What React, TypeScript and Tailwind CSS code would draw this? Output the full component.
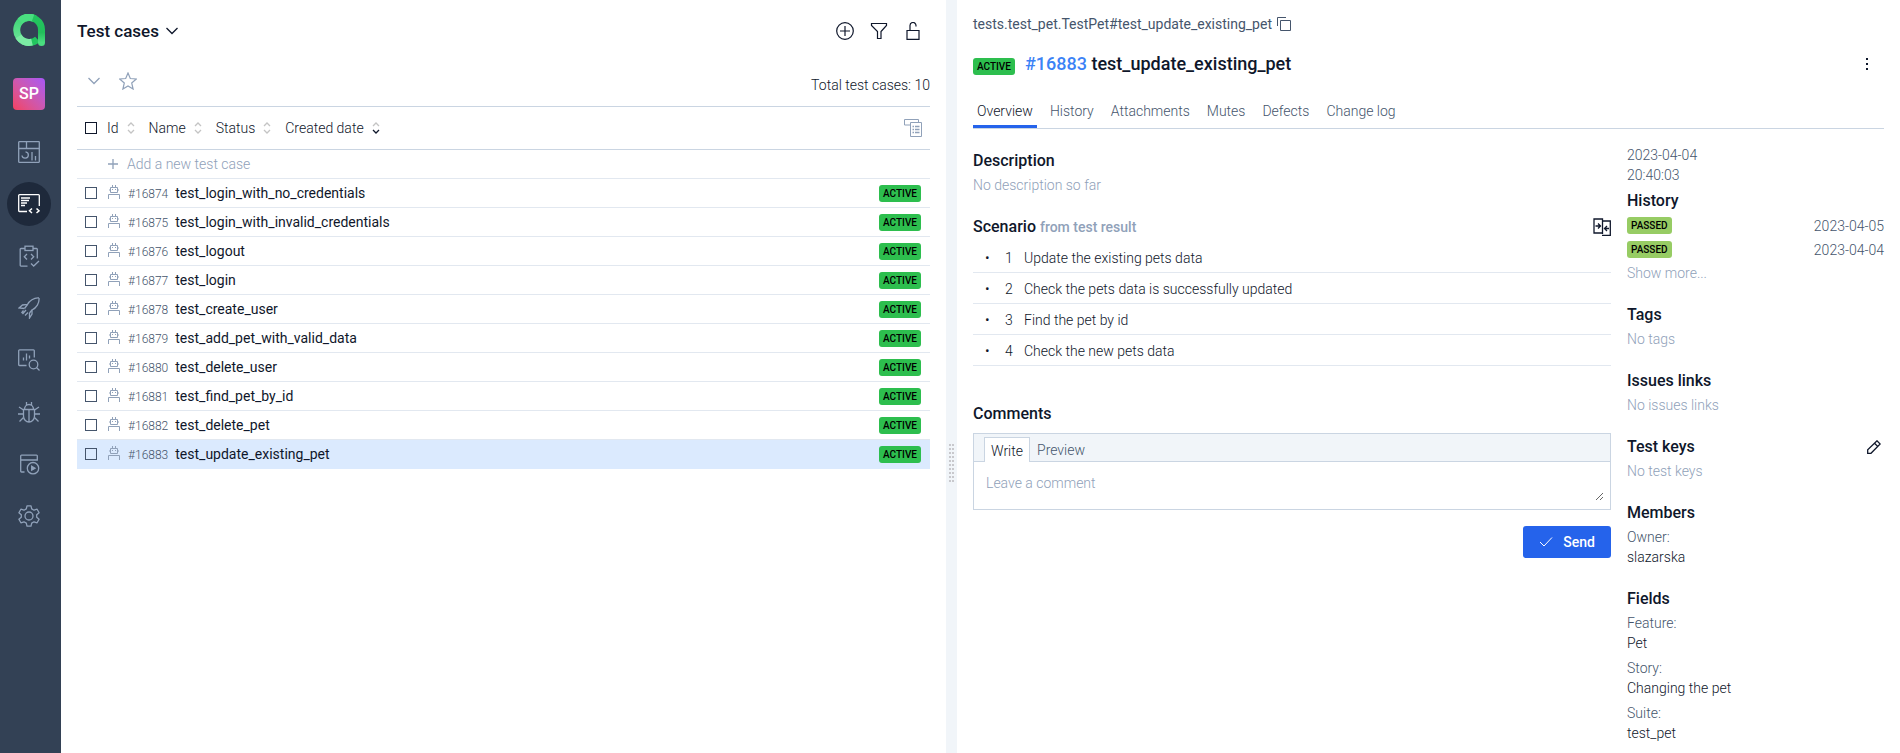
import React from "react";

type IconProps = { className?: string; children: React.ReactNode; box?: string; weight?: number };

function Icon({ className = "", children, box = "0 0 22 22", weight = 1 }: IconProps) {
  return (
    <svg viewBox={box} className={className} fill="none" stroke="currentColor" strokeWidth={weight} aria-hidden="true">
      {children}
    </svg>
  );
}

const navItems = [
  {
    label: "Dashboards",
    icon: (
      <>
        <rect x="0.7" y="0.7" width="20.600" height="20.600" rx="0.500" />
        <path d="M0.700 7.500h20.600M8.500 0.700v6.800M17.500 15v4.500M14 11v8.500" />
        <path d="M4 14.500a3.200 3.200 0 1 0 3.500-3.700" />
      </>
    ),
  },
  {
    label: "Test cases",
    active: true,
    icon: (
      <>
        <path d="M9 18.500H1.500a0.800 0.800 0 0 1-0.800-0.800V2.500a0.800 0.800 0 0 1 0.800-0.800h19a0.800 0.800 0 0 1 0.800 0.800V13" />
        <path d="M3 5h9M3 7.500h8M3 10h6M3 12.500h4" />
        <path d="M14 15.500l-2.500 2.300L14 20M18.500 15.500l2.500 2.300L18.500 20" strokeWidth="1.500" />
      </>
    ),
  },
  {
    label: "Test plans",
    icon: (
      <>
        <path d="M7 3.500H3a0.800 0.800 0 0 0-0.800 0.800v16a0.800 0.800 0 0 0 0.800 0.800h6.500" />
        <path d="M15 3.500h3.500a0.800 0.800 0 0 1 0.800 0.800V13.500" />
        <rect x="7" y="1.200" width="8" height="4.300" />
        <path d="M9 9l-2.700 2.700L9 14.500M13 9l2.700 2.700L13 14.500M13 18.500l2.700 2.500l5.300-5" />
      </>
    ),
  },
  {
    label: "Launches",
    icon: (
      <>
        <path d="M21 1c-5-0.500-10 3-11.500 6.500L4.500 8L1 11l5.500 0.500M21 1c0.500 5-2.500 10-7 12v4L11.500 21v-5" />
        <path d="M9.500 7.500L6.500 11.500M14 13l-2.500 3M8 13l-3.500 4M5.500 13.500l-2 2.500M10 15.500l-3 3" />
      </>
    ),
  },
  {
    label: "Analytics",
    icon: (
      <>
        <path d="M8.500 16.500H1.500a0.800 0.800 0 0 1-0.800-0.800V1.700a0.800 0.800 0 0 1 0.800-0.800h14a0.800 0.800 0 0 1 0.800 0.800V8.500" />
        <path d="M5.500 8.500V11.500M8.500 4.500v7M11.500 6.500v3" />
        <circle cx="15.500" cy="15.500" r="4.300" />
        <path d="M18.500 18.500l3 3" />
      </>
    ),
  },
  {
    label: "Defects",
    icon: (
      <>
        <path d="M5.500 8.500h11v6.500a5.500 6 0 0 1-11 0zM11 8.500v12.500M6.500 8.500a4.500 5 0 0 1 9 0M8.500 4V1M13.500 4V1" />
        <path d="M5.500 9L1 6M5.500 13H0M5.500 16.500L1.500 20.500M16.500 9l4.500-3M16.500 13H22M16.500 16.500l4 4" />
      </>
    ),
  },
  {
    label: "Jobs",
    icon: (
      <>
        <path d="M6.500 19H3.500a0.800 0.800 0 0 1-0.800-0.800V3a0.800 0.800 0 0 1 0.800-0.800h15a0.800 0.800 0 0 1 0.800 0.800V7H2.700" />
        <circle cx="15" cy="15.200" r="5.700" />
        <path d="M13.700 13.200l3.300 2l-3.300 2z" fill="currentColor" />
      </>
    ),
  },
  {
    label: "Settings",
    icon: (
      <>
        <circle cx="11" cy="11" r="4" />
        <path
          strokeLinejoin="round"
          d="M9 0.800h4l0.700 3.100 2.300 1.300 3.100-1 2 3.500-2.400 2.100v2.400l2.400 2.100-2 3.500-3.100-1-2.300 1.300-0.700 3.100H9l-0.700-3.100L6 16.800l-3.100 1-2-3.500 2.400-2.100V9.800L0.900 7.700l2-3.500 3.100 1 2.300-1.300z"
        />
      </>
    ),
  },
];

const cases = [
  { id: "#16874", name: "test_login_with_no_credentials" },
  { id: "#16875", name: "test_login_with_invalid_credentials" },
  { id: "#16876", name: "test_logout" },
  { id: "#16877", name: "test_login" },
  { id: "#16878", name: "test_create_user" },
  { id: "#16879", name: "test_add_pet_with_valid_data" },
  { id: "#16880", name: "test_delete_user" },
  { id: "#16881", name: "test_find_pet_by_id" },
  { id: "#16882", name: "test_delete_pet" },
  { id: "#16883", name: "test_update_existing_pet", selected: true },
];

const columns = [
  { label: "Id" },
  { label: "Name" },
  { label: "Status" },
  { label: "Created date", sorted: true },
];

const tabs = ["Overview", "History", "Attachments", "Mutes", "Defects", "Change log"];

const steps = [
  "Update the existing pets data",
  "Check the pets data is successfully updated",
  "Find the pet by id",
  "Check the new pets data",
];

const fields = [
  { label: "Feature:", value: "Pet" },
  { label: "Story:", value: "Changing the pet" },
  { label: "Suite:", value: "test_pet" },
];

function Logo() {
  return (
    <svg viewBox="0 0 32 32" className="size-8" aria-label="Allure TestOps" role="img" fill="none" strokeWidth="7">
      <defs>
        <linearGradient id="stem" x1="0" y1="0" x2="0" y2="1">
          <stop offset="0" stopColor="#22c55e" />
          <stop offset="0.600" stopColor="#22bf5b" />
          <stop offset="1" stopColor="#4ade80" />
        </linearGradient>
        <linearGradient id="ring" x1="0" y1="0" x2="0" y2="1">
          <stop offset="0" stopColor="#3fd476" />
          <stop offset="1" stopColor="#6ee79a" />
        </linearGradient>
      </defs>
      <path d="M24.500 25.200A12.500 12.500 0 0 1 15 28.500" stroke="#22c55e" />
      <path d="M16 28.500A12.500 12.500 0 1 1 22 4.900" stroke="url(#ring)" />
      <path d="M5.500 22.500A12.500 12.500 0 0 0 19 28.100" stroke="#7ceba4" />
      <path d="M12 4A12.500 12.500 0 0 1 28.500 16V28.500" stroke="url(#stem)" strokeLinecap="round" />
      <path d="M7 7A12.500 12.500 0 0 1 20 4" stroke="#4ade80" />
    </svg>
  );
}

function Robot() {
  return (
    <Icon box="0 0 12 14" className="h-[14px] w-3 text-slate-400">
      <path d="M0.500 14V9.500h11V14M2.500 2.500h7v5h-7zM4.500 0v2.500M7.500 0v2.500M1 5h1.500M9.500 5H11" />
      <path d="M4 4.500h1M7 4.500h1" />
    </Icon>
  );
}

function Sort({ sorted }: { sorted?: boolean }) {
  return (
    <svg viewBox="0 0 8 12" className="h-3 w-2" fill="none" strokeWidth="1.300" aria-hidden="true">
      <path d="M1 4l3-3 3 3" className="stroke-[#c4c4c4]" />
      <path d="M1 8l3 3 3-3" className={sorted ? "stroke-slate-900" : "stroke-[#c4c4c4]"} />
    </svg>
  );
}

function Badge({ children, tone }: { children: string; tone: "active" | "passed" }) {
  return (
    <span
      className={
        "inline-flex h-[17px] shrink-0 items-center rounded-[3px] px-1 pt-px text-[10px] font-medium leading-none text-black " +
        (tone === "active" ? "bg-[#2dbe4e]" : "bg-[#97cc64]")
      }
    >
      {children}
    </span>
  );
}

function Check({ label, dark }: { label: string; dark?: boolean }) {
  return (
    <input
      type="checkbox"
      aria-label={label}
      className={
        "size-3 shrink-0 appearance-none border bg-transparent " + (dark ? "border-slate-900" : "border-slate-600")
      }
    />
  );
}

function Section({ title, action, children }: { title: string; action?: React.ReactNode; children: React.ReactNode }) {
  return (
    <section className="mb-5">
      <div className="mb-0.5 flex h-6 items-center justify-between">
        <h2 className="text-base font-medium">{title}</h2>
        {action}
      </div>
      {children}
    </section>
  );
}

function Sidebar() {
  return (
    <aside className="flex flex-col items-center bg-[#334155] pt-3.5 pr-[3px]">
      <Logo />
      <button className="mt-8 size-8 rounded bg-linear-to-tr from-[#f43f5e] to-[#a855f7] text-base font-medium text-white">
        SP
      </button>
      <nav className="mt-5 flex flex-col gap-2">
        {navItems.map((item) => (
          <a
            key={item.label}
            href="#"
            aria-label={item.label}
            className={
              "flex size-11 items-center justify-center rounded-full " +
              (item.active ? "bg-[#1e293b] text-white" : "text-slate-400")
            }
          >
            <Icon className="size-[22px]" weight={1.3}>
              {item.icon}
            </Icon>
          </a>
        ))}
      </nav>
    </aside>
  );
}

function CaseList() {
  return (
    <main className="min-w-0 px-4">
      <header className="flex h-[62px] items-center justify-between">
        <button className="flex items-center gap-[7px]">
          <h1 className="text-[17px] font-medium">Test cases</h1>
          <Icon box="0 0 12 8" className="h-2 w-3" weight={1.3}>
            <path d="M0.500 1L6 6.500L11.500 1" />
          </Icon>
        </button>
        <div className="flex">
          <button aria-label="Create" className="flex h-8 w-[34px] items-center justify-center">
            <Icon box="0 0 18 18" className="size-[18px]" weight={1.2}>
              <circle cx="9" cy="9" r="8.300" />
              <path d="M9 4v10M4 9h10" />
            </Icon>
          </button>
          <button aria-label="Filter" className="flex h-8 w-[34px] items-center justify-center">
            <Icon box="0 0 18 18" className="size-[18px]" weight={1.2}>
              <path d="M1.500 1.500h15v2L11 9.500v7H7.500v-7L1.500 3.500z" />
            </Icon>
          </button>
          <button aria-label="Lock" className="flex h-8 w-[34px] items-center justify-center">
            <Icon box="0 0 18 18" className="size-[18px]" weight={1.2}>
              <path d="M3 8.500h12v8.800H3zM6 8.500V4a3 3.300 0 0 1 6-0.500V4.500" />
            </Icon>
          </button>
        </div>
      </header>
      <div className="flex h-11 items-start justify-between">
        <div className="flex items-center">
          <button aria-label="Expand" className="flex h-[38px] w-[34px] items-center justify-center text-slate-400">
            <Icon box="0 0 12 8" className="h-2 w-3" weight={1.3}>
              <path d="M0.500 1L6 6.500L11.500 1" />
            </Icon>
          </button>
          <button aria-label="Favourites" className="flex h-[38px] w-[34px] items-center justify-center text-slate-400">
            <Icon box="0 0 18 18" className="size-[18px]" weight={1.2}>
              <path d="M9 1l2.300 5.500 6 0.500-4.600 4 1.400 6L9 13.900 3.900 17l1.400-6L0.700 7l6-0.500z" />
            </Icon>
          </button>
        </div>
        <p className="pt-[13px]">Total test cases: 10</p>
      </div>
      <div className="flex h-11 items-center border-y border-slate-300 px-2">
        <Check label="Select all" dark />
        <div className="ml-2.5 flex flex-1 gap-[14px]">
          {columns.map((c) => (
            <button key={c.label} className="flex items-center gap-2">
              {c.label}
              <Sort sorted={c.sorted} />
            </button>
          ))}
        </div>
        <button aria-label="Columns" className="text-slate-400">
          <Icon box="0 0 18 18" className="size-[18px]">
            <path d="M6.500 6H0.500V0.500h14v2.500M6.500 3.500h11v14h-11z" />
            <path d="M8.500 7.500h1.500M11 7.500h4.500M8.500 10.500h1.500M11 10.500h4.500M8.500 13.500h1.500M11 13.500h4.500" strokeWidth="1.500" />
          </Icon>
        </button>
      </div>
      <button className="flex h-[29px] w-full items-center gap-[9px] border-b border-slate-200 pl-[31px] text-slate-400">
        <Icon box="0 0 10 10" className="size-2.5" weight={1.3}>
          <path d="M5 0v10M0 5h10" />
        </Icon>
        Add a new test case
      </button>
      <ul>
        {cases.map((c) => (
          <li
            key={c.id}
            className={
              "flex h-[29px] items-center border-b pl-2 pr-[9px] " +
              (c.selected ? "border-[#dbeafe] bg-[#dbeafe]" : "border-slate-200")
            }
          >
            <Check label={c.name} />
            <span className="ml-[11px] flex w-5 pb-0.5">
              <Robot />
            </span>
            <a href="#" className="flex flex-1 items-baseline gap-[7px]">
              <span className="text-xs text-slate-600">{c.id}</span>
              <span className="font-normal">{c.name}</span>
            </a>
            <Badge tone="active">ACTIVE</Badge>
          </li>
        ))}
      </ul>
    </main>
  );
}

function CommentBox() {
  return (
    <>
      <div className="border border-slate-300">
        <div className="flex h-7 items-end border-b border-slate-300 bg-slate-100 pl-2.5">
          <button className="-mb-px h-[25px] border border-b-0 border-slate-300 bg-white px-1.5 pt-px">Write</button>
          <button className="h-6 px-[7px] pt-px text-slate-600">Preview</button>
        </div>
        <div className="px-1.5 py-2">
          <textarea
            aria-label="Comment"
            placeholder="Leave a comment"
            rows={1}
            className="block h-[31px] w-full resize px-1.5 py-0.5 leading-[22px] placeholder:text-slate-400"
          />
        </div>
      </div>
      <div className="mt-4 flex justify-end">
        <button className="flex h-8 items-center gap-2.5 rounded-[3px] bg-[#2563eb] px-4 font-medium text-white">
          <Icon box="0 0 14 10" className="h-2.5 w-3.5">
            <path d="M1 5l4 4L13 0.500" />
          </Icon>
          Send
        </button>
      </div>
    </>
  );
}

function Details() {
  return (
    <section className="min-w-0 px-4">
      <div className="mb-0.5 flex h-12 items-center gap-[5px] font-normal text-slate-600">
        tests.test_pet.TestPet#test_update_existing_pet
        <button aria-label="Copy">
          <Icon box="0 0 14 14" className="size-3.5">
            <path d="M3.500 3.500h10v10h-10zM0.500 9V0.500H9" />
          </Icon>
        </button>
      </div>
      <div className="flex h-7 items-center">
        <span className="mr-2.5 flex pt-1">
          <Badge tone="active">ACTIVE</Badge>
        </span>
        <h1 className="flex-1 text-[18px] font-medium">
          <a href="#" className="text-[#3b82f6]">#16883</a> test_update_existing_pet
        </h1>
        <button aria-label="More" className="flex w-[34px] justify-center">
          <svg viewBox="0 0 4 14" className="h-3.5 w-1" fill="currentColor" aria-hidden="true">
            <path d="M1 1h2v2H1zM1 6h2v2H1zM1 11h2v2H1z" />
          </svg>
        </button>
      </div>
      <nav className="mt-4 flex h-[35px] gap-[9px] border-b border-slate-300">
        {tabs.map((t, i) => (
          <a
            key={t}
            href="#"
            className={
              "flex items-center border-b-[3px] px-1 pt-0.5 " +
              (i === 0 ? "border-[#2563eb]" : "border-transparent text-slate-600")
            }
          >
            {t}
          </a>
        ))}
      </nav>
      <div className="flex gap-4 pt-4">
        <div className="min-w-0 flex-1 pt-1">
          <Section title="Description">
            <p className="text-slate-400">No description so far</p>
          </Section>
          <div className="flex h-6 items-center justify-between">
            <h2 className="text-base font-medium">
              Scenario <span className="text-sm text-slate-400">from test result</span>
            </h2>
            <button aria-label="Compare">
              <Icon box="0 0 18 18" className="size-[18px]" weight={1.3}>
                <path d="M9.500 15H1V1h8.500v15M9.500 3h7.800V17.300H9M2.500 8h5M5 5.500L7.500 8L5 10.500M16 10.500h-4.500M14 8l-2.500 2.500L14 13" />
              </Icon>
            </button>
          </div>
          <ol className="mt-[3px] mb-9">
            {steps.map((s, i) => (
              <li key={s} className="flex h-[31px] items-center border-b border-slate-200 pt-px">
                <span className="ml-3 w-5">•</span>
                <span className="w-[19px]">{i + 1}</span>
                {s}
              </li>
            ))}
          </ol>
          <h2 className="mb-[7px] flex h-6 items-center text-base font-medium">Comments</h2>
          <CommentBox />
        </div>
        <div className="w-[257px]">
          <p className="mb-1 w-20 text-slate-600">2023-04-04 20:40:03</p>
          <h2 className="flex h-6 items-center text-base font-medium">History</h2>
          <ul className="text-slate-600">
            {["2023-04-05", "2023-04-04"].map((d) => (
              <li key={d} className="flex h-6 items-center justify-between pt-px">
                <Badge tone="passed">PASSED</Badge>
                {d}
              </li>
            ))}
          </ul>
          <button className="mb-[18px] flex h-6 items-center text-slate-400">Show more...</button>
          <Section title="Tags">
            <p className="text-slate-400">No tags</p>
          </Section>
          <Section title="Issues links">
            <p className="text-slate-400">No issues links</p>
          </Section>
          <Section
            title="Test keys"
            action={
              <button aria-label="Edit test keys" className="mr-[3px]">
                <Icon box="0 0 14 14" className="size-3.5" weight={1.3}>
                  <path d="M0.700 13.300v-3.500L10 0.800l3.200 3.200L4 13.300zM7.500 3.200l3.200 3.200" />
                </Icon>
              </button>
            }
          >
            <p className="text-slate-400">No test keys</p>
          </Section>
          <Section title="Members">
            <p className="text-slate-600">Owner:</p>
            <p>slazarska</p>
          </Section>
          <Section title="Fields">
            <dl>
              {fields.map((f) => (
                <div key={f.label} className="mb-[5px]">
                  <dt className="text-slate-600">{f.label}</dt>
                  <dd>{f.value}</dd>
                </div>
              ))}
            </dl>
          </Section>
        </div>
      </div>
    </section>
  );
}

export default function App() {
  return (
    <div className="grid h-screen grid-cols-[61px_885fr_11px_943fr] overflow-hidden bg-white font-['Roboto',sans-serif] text-sm leading-5 font-light text-slate-900">
      <Sidebar />
      <CaseList />
      <div role="separator" className="flex items-center justify-center bg-slate-100 pt-[173px]">
        <div className="mb-2.5 grid grid-cols-2 gap-x-px gap-y-0.5">
          {Array.from({ length: 20 }, (_, i) => (
            <span key={i} className="size-0.5 bg-[#c8c8cc]" />
          ))}
        </div>
      </div>
      <Details />
    </div>
  );
}
